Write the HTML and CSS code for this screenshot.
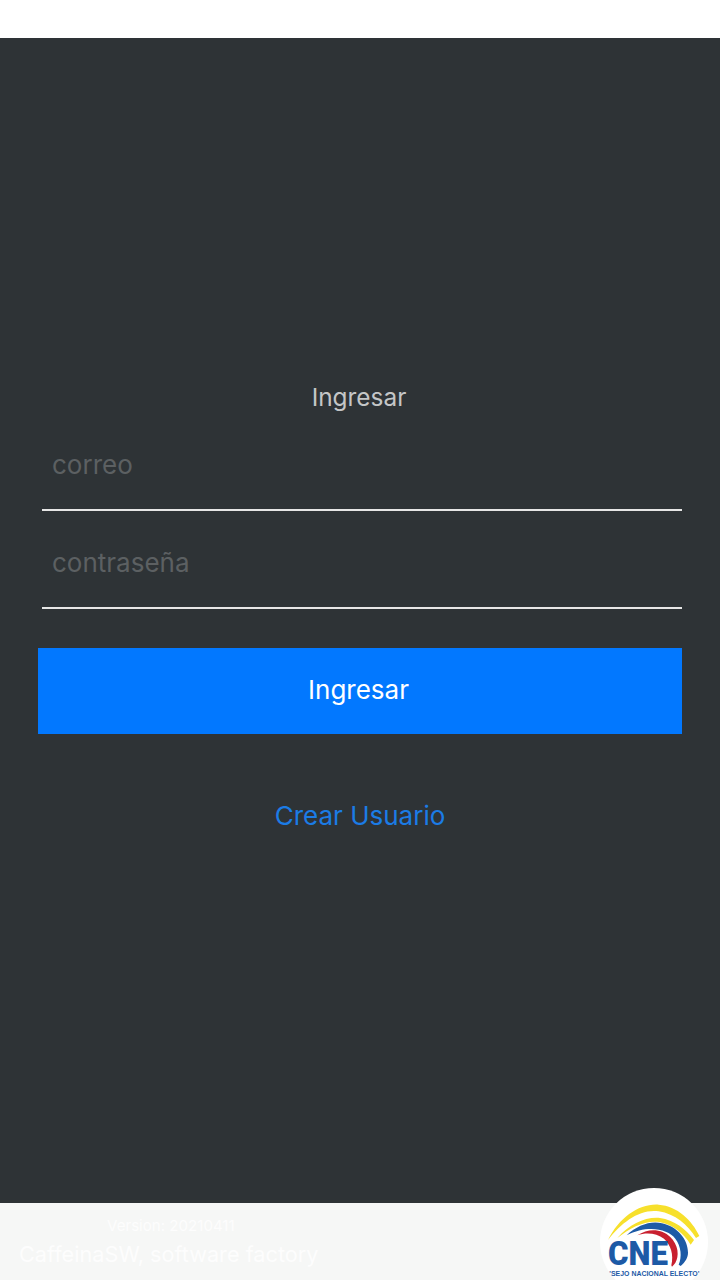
FILE: index.html
```html
<!DOCTYPE html>
<html lang="en">
<head>
  <meta charset="UTF-8" />
  <meta name="viewport" content="width=device-width, initial-scale=1.0"/>
  <title>Ingresar</title>
  <link rel="stylesheet" href="styles.css">
</head>
<body>
  <div class="status-bar"></div>

  <main class="content">
    <h1 class="title">Ingresar</h1>

    <form class="login-form">
      <input class="field" type="text" placeholder="correo">
      <input class="field" type="password" placeholder="contraseña">
      <button class="submit" type="button">Ingresar</button>
    </form>

    <a class="create-link" href="#">Crear Usuario</a>
  </main>

  <footer class="footer">
    <div class="credits">
      <div class="version">Version: 20210411</div>
      <div class="company">CaffeinaSW, software factory</div>
    </div>

    <svg class="logo" viewBox="0 0 330 276" aria-label="CNE">
      <circle cx="162" cy="162" r="162" fill="#ffffff"/>
      <path fill="#f7e02c" d="M24 156 C 58 88, 118 46, 176 50 C 232 54, 276 96, 298 144 L 288 150 C 262 110, 226 78, 176 70 C 120 62, 66 102, 24 156 Z"/>
      <path fill="#f7e02c" d="M52 150 C 90 108, 136 86, 180 90 C 222 95, 258 124, 282 156 L 272 170 C 252 136, 218 110, 178 102 C 136 96, 92 118, 52 150 Z"/>
      <path fill="#1d5aa6" d="M80 142 C 112 112, 150 98, 186 106 C 232 116, 264 154, 264 194 C 264 208, 256 222, 242 234 L 236 230 C 246 206, 244 176, 226 152 C 204 122, 140 110, 80 142 Z"/>
      <path fill="#c8202f" d="M112 142 C 136 126, 164 122, 188 132 C 222 146, 238 182, 232 208 C 230 220, 224 230, 216 236 L 214 232 C 222 200, 212 170, 192 152 C 170 136, 140 132, 112 142 Z"/>
      <text class="logo-mark" x="24" y="230" textLength="180" lengthAdjust="spacingAndGlyphs">CNE</text>
      <text class="logo-caption" x="28" y="263" textLength="270" lengthAdjust="spacingAndGlyphs">'SEJO NACIONAL ELECTO'</text>
    </svg>
  </footer>
</body>
</html>
```

FILE: styles.css
```css
html, body {
  margin: 0;
  padding: 0;
}

body {
  width: 720px;
  height: 1280px;
  display: flex;
  flex-direction: column;
  overflow: hidden;
  font-family: Inter, "Liberation Sans", sans-serif;
  background-color: #ffffff;
}

.status-bar {
  height: 38px;
  background-color: #ffffff;
}

.content {
  flex: 1;
  display: flex;
  flex-direction: column;
  padding: 342px 38px 0;
  background-color: #2e3336;
}

.title {
  margin: 0;
  padding-right: 2px;
  font-size: 24.4px;
  line-height: 34px;
  font-weight: 400;
  text-align: center;
  color: #c4c6c7;
}

.login-form {
  display: flex;
  flex-direction: column;
  margin-top: 5px;
  gap: 6px;
}

.field {
  display: block;
  box-sizing: border-box;
  width: 640px;
  height: 92px;
  margin-left: 4px;
  padding: 0 10px;
  border: none;
  border-bottom: 2px solid #e6e6e6;
  border-radius: 0;
  outline: none;
  background: transparent;
  font-family: inherit;
  font-size: 26px;
  color: #ffffff;
}

.field::placeholder {
  color: #5c6062;
  opacity: 1;
}

.submit {
  height: 86px;
  margin-top: 33px;
  padding: 0 3px 3px 0;
  border: none;
  background-color: #0278ff;
  font-family: inherit;
  font-size: 26px;
  color: #ffffff;
}

.create-link {
  margin-top: 63px;
  font-size: 26px;
  line-height: 38px;
  text-align: center;
  text-decoration: none;
  color: #1b7ce6;
}

.footer {
  position: relative;
  height: 77px;
  background-color: #f6f7f6;
}

.credits {
  padding: 14px 0 0 19px;
  color: #fdfdfd;
}

.version {
  padding-left: 88px;
  font-size: 15.1px;
  line-height: 18px;
}

.company {
  margin-top: 5px;
  font-size: 21.7px;
  line-height: 28px;
}

.logo {
  position: absolute;
  right: 10px;
  bottom: 0;
  width: 110px;
  height: 92px;
}

.logo-mark {
  font-family: Roboto, "Liberation Sans", sans-serif;
  font-size: 98px;
  font-weight: 900;
  fill: #1d5aa6;
}

.logo-caption {
  font-family: "Liberation Sans", sans-serif;
  font-size: 24px;
  font-weight: 700;
  fill: #1d5aa6;
}
```
